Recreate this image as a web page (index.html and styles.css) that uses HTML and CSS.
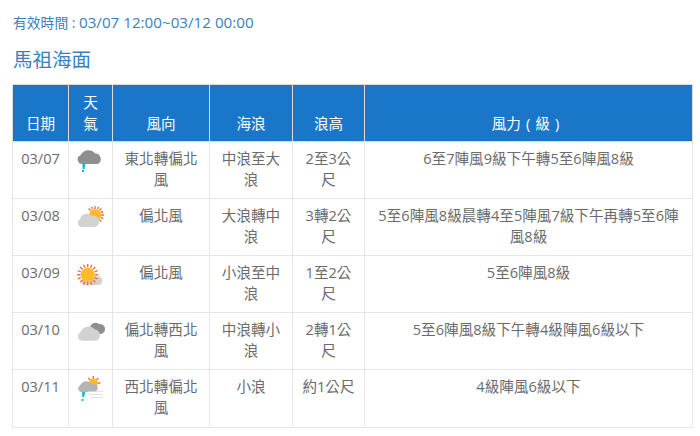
FILE: index.html
```html
<!DOCTYPE html>
<html lang="zh-Hant">
<head>
<meta charset="utf-8">
<title>馬祖海面</title>
<link rel="stylesheet" href="styles.css">
</head>
<body>
<p class="valid">有效時間 : <span class="range">03/07 12:00~03/12 00:00</span></p>
<h2 class="area">馬祖海面</h2>
<table class="sea">
<colgroup><col class="c1"><col class="c2"><col class="c3"><col class="c4"><col class="c5"><col class="c6"></colgroup>
<thead>
<tr><th>日期</th><th>天氣</th><th>風向</th><th>海浪</th><th>浪高</th><th class="force">風力 ( 級 )</th></tr>
</thead>
<tbody>
<tr><td>03/07</td><td class="ic"><svg class="icon" viewBox="0 0 30 30"><path class="dk" d="M7 17a4.500 4.500 0 0 1-1.500-8.700A8.500 8.500 0 0 1 20 6.500a5.500 5.500 0 0 1 2.500 10.500z"/><path class="rain" d="M7.500 16h3l-1 6h-2zM7 23h2v2H7z"/></svg></td><td>東北轉偏北風</td><td>中浪至大浪</td><td>2至3公尺</td><td>6至7陣風9級下午轉5至6陣風8級</td></tr>
<tr><td>03/08</td><td class="ic"><svg class="icon" viewBox="0 0 30 30"><g class="rays"><path d="M20 2v3M13.600 4.600l2 2M26.400 4.600l-2 2M29 11h-3M26.400 17.400l-2-2M16.500 2.800l1 2.500M23.500 2.800l-1 2.500M28.200 7.500l-2.500 1M28.200 14.500l-2.500-1"/></g><circle class="sun" cx="20" cy="11" r="6"/><path class="lt" d="M6.500 23a4 4 0 0 1-1.500-7.500 7 7 0 0 1 12-3.500 5.500 5.500 0 0 1 3 11z"/></svg></td><td>偏北風</td><td>大浪轉中浪</td><td>3轉2公尺</td><td>5至6陣風8級晨轉4至5陣風7級下午再轉5至6陣風8級</td></tr>
<tr><td>03/09</td><td class="ic"><svg class="icon" viewBox="0 0 30 30"><path class="lt" d="M10 24a3.500 3.500 0 0 1 0-7 6.500 6.500 0 0 1 11-1.500 4.500 4.500 0 0 1 3.500 8.500z"/><g class="rays"><path d="M12.700 3v3.500M12.700 21v3.500M2 13.700h3.500M20 13.700h3.500M5.100 6.100l2.500 2.500M20.300 6.100l-2.500 2.500M5.100 21.300l2.500-2.500M20.300 21.300l-2.500-2.500M8.600 3.800l1.300 3M16.800 3.800l-1.300 3M2.800 9.600l3 1.300M22.600 9.600l-3 1.300M2.800 17.800l3-1.300M22.600 17.800l-3-1.300M8.600 23.600l1.300-3M16.800 23.600l-1.300-3"/></g><circle class="sun" cx="12.700" cy="13.700" r="7"/></svg></td><td>偏北風</td><td>小浪至中浪</td><td>1至2公尺</td><td>5至6陣風8級</td></tr>
<tr><td>03/10</td><td class="ic"><svg class="icon" viewBox="0 0 30 30"><path class="dk" d="M15 10a5.500 5.500 0 0 1 9-4 4 4 0 0 1 2 10h-6z"/><path class="lt" d="M7 22.700a4.500 4.500 0 0 1-1.500-8.500A8.500 8.500 0 0 1 20 11.500a5.800 5.800 0 0 1 1 11.200z"/></svg></td><td>偏北轉西北風</td><td>中浪轉小浪</td><td>2轉1公尺</td><td>5至6陣風8級下午轉4級陣風6級以下</td></tr>
<tr><td>03/11</td><td class="ic"><svg class="icon" viewBox="0 0 30 30"><g class="rays"><path d="M18.300 1v3M13.300 3l2 2M23.300 3l-2 2M25.300 8h-3"/></g><circle class="sun" cx="18.300" cy="8" r="4.500"/><path class="md" d="M6 17a3.500 3.500 0 0 1-1-6.500A7 7 0 0 1 17 9a4.200 4.200 0 0 1 3 8z"/><path class="wind" d="M13 17c5-2 8 1 15-1M13 20c5-2 8 1 15-1M16 23c4-1.500 7 .500 12-1"/><path class="rain" d="M7.200 17h3l-1 5h-2zM6.500 24h2v2h-2z"/></svg></td><td>西北轉偏北風</td><td>小浪</td><td>約1公尺</td><td>4級陣風6級以下</td></tr>
</tbody>
</table>
</body>
</html>
```
FILE: styles.css
```css
* { box-sizing: border-box; }
html, body { margin: 0; padding: 0; background: #fff; }
body {
  padding: 12px 7px 0 12px;
  font-family: "Open Sans", "Noto Sans CJK TC", sans-serif;
  overflow: hidden;
}
.valid {
  margin: 0 0 0 1px;
  font-size: 13.8px;
  line-height: 20px;
  color: #3a80bd;
}
.range { font-size: 15.2px; }
.area {
  margin: 13px 0 11px 1px;
  font-size: 19.5px;
  line-height: 27px;
  font-weight: 400;
  color: #3a80bd;
}
.sea {
  width: 681px;
  table-layout: fixed;
  border-collapse: collapse;
  font-size: 14.6px;
  line-height: 21px;
  color: #6b6b6b;
  text-align: center;
}
.c1 { width: 56px; }
.c2 { width: 44px; }
.c3 { width: 97px; }
.c4 { width: 83px; }
.c5 { width: 72px; }
.sea th, .sea td {
  border: 1px solid #e6e6e6;
}
.sea th {
  padding: 7px 8px 7px;
  vertical-align: bottom;
  font-weight: 400;
  background: #1976c8;
  color: #fff;
  border-color: #dcdcdc;
}
.sea th.force { word-spacing: 1.3px; padding-right: 14px; }
.sea td {
  height: 57px;
  padding: 6px 7px;
  vertical-align: top;
}
.sea tr:last-child td { height: 58px; }
.sea td.ic { padding: 5px 2px 0 0; }
.icon { display: block; width: 30px; height: 30px; margin: 0 auto; filter: blur(0.3px); }
.dk { fill: #8f8f8f; }
.md { fill: #b4b4b4; }
.lt { fill: #d2d2d2; }
.sun { fill: #fdbb2a; }
.rays path { fill: none; stroke: #f2703c; stroke-width: 1.4; }
.rain { fill: #1fb4d8; }
.wind { fill: none; stroke: #dcdcdc; stroke-width: 1; }
```
